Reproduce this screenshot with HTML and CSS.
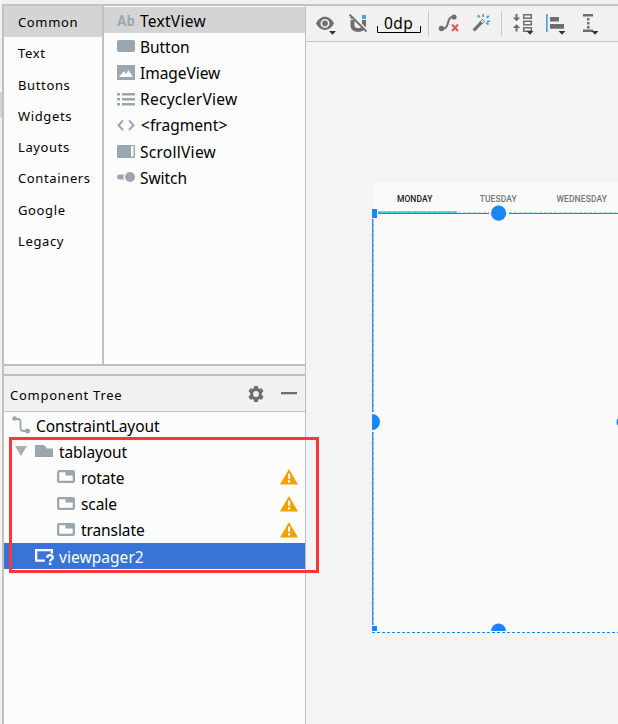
FILE: index.html
```html
<!DOCTYPE html>
<html lang="en">
<head>
<meta charset="utf-8">
<title>Layout Editor</title>
<link rel="stylesheet" href="styles.css">
</head>
<body>
<div class="editor">
  <div class="top-strip"></div>
  <div class="gutter"><div class="gutter-tab"></div></div>
  <aside class="side">
    <section class="palette">
      <nav class="categories">
        <div class="category selected">Common</div>
        <div class="category">Text</div>
        <div class="category">Buttons</div>
        <div class="category">Widgets</div>
        <div class="category">Layouts</div>
        <div class="category">Containers</div>
        <div class="category">Google</div>
        <div class="category">Legacy</div>
      </nav>
      <div class="widgets">
        <div class="widget wide selected"><span class="ab">Ab</span><span>TextView</span></div>
        <div class="widget"><svg class="icon" viewBox="0 0 18 18"><rect y="3" width="18" height="12" rx="2"/></svg><span>Button</span></div>
        <div class="widget"><svg class="icon" viewBox="0 0 18 18"><path fill-rule="evenodd" d="M0 2h18v15H0zM2 14h14l-4.500-7-2.500 4-2-3z"/></svg><span>ImageView</span></div>
        <div class="widget wide"><svg class="icon" viewBox="0 0 18 18"><path d="M0 3h3v2.500H0zM5 3h13v2.500H5zM0 8h3v2.500H0zM5 8h13v2.500H5zM0 13h3v2.500H0zM5 13h13v2.500H5z"/></svg><span>RecyclerView</span></div>
        <div class="widget fragment"><svg class="icon line" viewBox="0 0 18 18"><path d="M6 4.500L1.500 9.200 6 14M12 4.500l4.500 4.700L12 14"/></svg><span>&lt;fragment&gt;</span></div>
        <div class="widget wide"><svg class="icon" viewBox="0 0 18 18"><path fill-rule="evenodd" d="M1 3h16a1 1 0 011 1v11a1 1 0 01-1 1H1a1 1 0 01-1-1V4a1 1 0 011-1zM14 4v10.500h2.500V4z"/></svg><span>ScrollView</span></div>
        <div class="widget switch"><svg class="icon" viewBox="0 0 18 18"><path d="M2.500 6.500H7a6 6 0 000 5H2.500a2.500 2.500 0 010-5z"/><circle cx="13" cy="9" r="5"/></svg><span>Switch</span></div>
      </div>
    </section>
    <div class="splitter"></div>
    <header class="tree-header">
      <span class="tree-title">Component Tree</span>
      <svg class="gear" viewBox="0 0 18 18"><path fill-rule="evenodd" d="M7.200 1h3.600l.5 2.300 1.200.7 2.200-.8 1.800 3.100L14.800 8v2l1.700 1.700-1.800 3.100-2.200-.8-1.200.7-.5 2.300H7.200l-.5-2.300-1.200-.7-2.200.8-1.800-3.100L3.200 10V8L1.500 6.300l1.800-3.100 2.200.8 1.200-.7zM9 6.100a2.900 2.900 0 100 5.800 2.900 2.900 0 000-5.800z"/></svg>
      <svg class="minus" viewBox="0 0 16 18"><path d="M0 7h16v2.300H0z"/></svg>
    </header>
    <section class="tree">
      <div class="node root"><svg class="icon" viewBox="0 0 18 18"><circle cx="2.500" cy="2.500" r="2.300"/><circle cx="15.500" cy="15" r="2.500"/><path class="wire" d="M3 3h3c2 0 2.500 1 2.500 3v6c0 2 1 3 3 3h4"/></svg><span>ConstraintLayout</span></div>
      <div class="node branch"><i class="arrow"></i><svg class="icon" viewBox="0 0 18 18"><path d="M0 3h9l3 3.500h6V15H0z"/></svg><span>tablayout</span></div>
      <div class="node leaf"><svg class="icon" viewBox="0 0 18 18"><use href="#tab-item"/></svg><span>rotate</span><svg class="warn" viewBox="0 0 18 16"><use href="#warning"/></svg></div>
      <div class="node leaf"><svg class="icon" viewBox="0 0 18 18"><use href="#tab-item"/></svg><span>scale</span><svg class="warn" viewBox="0 0 18 16"><use href="#warning"/></svg></div>
      <div class="node leaf"><svg class="icon" viewBox="0 0 18 18"><use href="#tab-item"/></svg><span>translate</span><svg class="warn" viewBox="0 0 18 16"><use href="#warning"/></svg></div>
      <div class="node pager selected"><svg class="icon" viewBox="0 0 19 18"><path d="M0 2h18v4.500h-2.300V4.300H2.300v8.200H10v2.300H0z"/><path class="question" d="M12.200 10.800c0-3.600 5.600-3.500 5.600-.3 0 2-2.700 1.800-2.700 4"/><path d="M13.900 15.600h2.500V18h-2.500z"/></svg><span>viewpager2</span></div>
    </section>
  </aside>
  <main class="design">
    <div class="toolbar">
      <svg class="tools" viewBox="306 6 312 35">
        <g class="dark">
          <path fill-rule="evenodd" d="M316 23.500c4-9 14-9 18 0-4 8.500-14 8.500-18 0zm9-4.600a4.500 4.500 0 100 9 4.500 4.500 0 000-9z"/><circle cx="325" cy="23.400" r="2.800"/>
          <path d="M350.500 20h4v5.500c0 3.500 7.500 3.500 7.500 0V20h4v5.500c0 8.500-15.500 8.500-15.500 0z"/>
          <circle cx="441.500" cy="28.500" r="2.700"/><circle cx="454" cy="17" r="2.600"/>
          <path d="M472.500 29.500l9.500-10 2.300 2.300-9.500 9.700z"/>
          <path d="M515.500 14h2v3.500h2.800l-3.800 3.800-3.800-3.800h2.800zM515.500 31.500h2V28h2.800l-3.800-3.800-3.800 3.800h2.800z"/>
          <path d="M550 17h9v4.500h-9zM550 24h14v4.800h-14zM583 14h10v2.500h-10zM583 29.500h10V32h-10zM587 18h2.500v2.500H587zM587 22h2.500v2.500H587zM587 26h2.500v2.500H587z"/>
        </g>
        <path class="blue" d="M350.500 16h4v3h-4zM362 15h4v4h-4zM546 14h1.700v18H546zM482.300 14h1.700v3h-1.700zM477 16l1.500-1.500 2 2-1.500 1.500zM486 17l2-2 1.500 1.500-2 2zM487 20.500h3v1.500h-3zM485.500 23l1.500-1.300 2.200 2.300-1.500 1.300z"/>
        <path class="slash-gap" d="M351 14.500l16 16"/><path class="slash" d="M349.500 14.500l17 17"/>
        <path class="wire" d="M442 28.500h2c5 0 3-11.500 8-11.500h2"/>
        <path class="red" d="M452 24.500l6 6.500m0-6.500l-6 6.500"/>
        <path class="wand" d="M480.300 21.500l2.200-2.200 2 2-2.200 2.200z"/>
        <path class="bracket" d="M377.500 26v6.500h43V26"/>
        <g class="box"><path d="M523.700 14.700h7.600v3.600h-7.600zM523.700 21.200h7.600v3.600h-7.600zM523.700 27.700h7.600v3.600h-7.600z"/></g>
        <path class="divider" d="M428.500 11v25M501.500 11v25"/>
        <path class="caret" d="M329 31h7l-3.500 3.800zM526.500 31h7l-3.500 3.800zM558.500 31h7l-3.500 3.800zM591.500 31h7l-3.500 3.800z"/>
      </svg>
      <span class="margin-value">0dp</span>
    </div>
    <div class="canvas">
      <div class="device">
        <div class="tabs"><span class="tab active">MONDAY</span><span class="tab">TUESDAY</span><span class="tab wed">WEDNESDAY</span></div>
      </div>
      <svg class="handles" viewBox="366 200 252 440">
        <path class="teal" d="M378 211h79v2.500h-79z"/>
        <path class="edge" d="M378 213.500h111M509 213.500h109M372.700 219v193M372.700 432v193"/>
        <path class="edge-dashes" d="M378 212.500h111M509 212.500h109M373.500 219v193M373.500 432v193"/>
        <path class="dashes" d="M372 632.500h246"/>
        <path class="halo" d="M371 208h7v11h-7zM371 625h7v7h-7z"/>
        <path class="fill" d="M372 209h5v9h-5zM372 626h5v5h-5zM372 414a8 8 0 010 16zM491 631a7.500 7.500 0 0115 0zM618 418.500c-2 1-2 6 0 7z"/>
        <circle class="fill" cx="498.600" cy="213.200" r="7.600"/>
      </svg>
    </div>
  </main>
  <div class="highlight"></div>
</div>
<svg class="defs">
  <defs>
    <g id="tab-item"><path fill-rule="evenodd" d="M2 2h14a2 2 0 012 2v9a2 2 0 01-2 2H2a2 2 0 01-2-2V4a2 2 0 012-2zM2.300 4.300v8.400h13.400V7.500H8.500V4.300z"/></g>
    <g id="warning"><path class="tri" d="M9 0l9 15.500H0z"/><path class="mark" d="M8 4.800h2.200v5H8zM8 11.300h2.200v2.200H8z"/></g>
  </defs>
</svg>
</body>
</html>
```
FILE: styles.css
```css
* { box-sizing: border-box; }
body { margin: 0; background: #f4f4f4; color: #000; overflow: hidden; font-family: "Noto Sans", "Open Sans", sans-serif; }
svg { display: block; }
.defs { position: absolute; width: 0; height: 0; }
.editor {
  position: relative;
  display: grid;
  grid-template: 6px 718px / 4px 302px 312px;
  width: 618px;
  height: 724px;
}
.top-strip { grid-column: 1 / -1; margin-left: 2px; background: #f1f1f1; border-bottom: 2px solid #c3c3c3; }
.gutter { background: #f1f1f1; border-right: 2px solid #c0c0c0; padding-top: 86px; }
.gutter-tab { height: 26px; background: #d4d4d4; }
.side { display: flex; flex-direction: column; background: #fcfcfc; border-right: 1px solid #c0c0c0; }

.palette { display: flex; height: 358px; }
.categories { width: 100px; border-right: 2px solid #c0c0c0; }
.category { height: 31.25px; padding-left: 14px; font-size: 13px; line-height: 32px; letter-spacing: .63px; white-space: nowrap; }
.category.selected { background: #d4d4d4; }
.widgets { flex: 1; padding-top: 1px; }
.widget { display: flex; align-items: center; gap: 5px; height: 26.2px; padding-left: 13px; font-size: 15.5px; letter-spacing: -.05px; white-space: nowrap; }
.widget.wide { letter-spacing: .27px; }
.widget.selected { background: #d4d4d4; }
.widget.fragment { gap: 6px; letter-spacing: .05px; }
.icon { flex: none; width: 18px; height: 18px; fill: #9aa7b0; }
.icon.line { fill: none; stroke: #9aa7b0; stroke-width: 2; }
.icon .wire { fill: none; stroke: #9aa7b0; stroke-width: 1.8; }
.ab { width: 18px; color: #9aa7b0; font: bold 14px Roboto, sans-serif; }
.widget span, .node span { padding-top: 1px; }

.splitter { height: 12px; background: #f1f1f1; border-top: 2px solid #c0c0c0; border-bottom: 2px solid #c0c0c0; }
.tree-header { display: flex; align-items: center; height: 36px; padding: 0 8px 0 6px; background: #f1f1f1; border-bottom: 1px solid #c0c0c0; }
.tree-title { flex: 1; font-size: 13px; letter-spacing: .75px; padding-top: 3px; }
.gear { width: 18px; height: 18px; fill: #6e6e6e; margin-right: 16px; }
.minus { width: 16px; height: 18px; fill: #6e6e6e; }
.tree { flex: 1; }
.node { display: flex; align-items: center; gap: 6px; height: 26.2px; font-size: 15.5px; letter-spacing: -.1px; white-space: nowrap; }
.root { padding-left: 8px; }
.branch { padding-left: 11px; }
.leaf { padding: 0 7px 0 53px; }
.pager { padding-left: 31px; letter-spacing: .05px; }
.node.selected { background: #3874d8; color: #fff; }
.selected .icon { fill: #fff; width: 19px; margin-right: -1px; }
.question { fill: none; stroke: #fff; stroke-width: 2.300; }
.arrow { border: 6px solid transparent; border-top: 10px solid #adadad; border-bottom: 0; margin-right: 2px; }
.warn { width: 18px; height: 16px; margin-left: auto; }
.tri { fill: #eda200; }
.mark { fill: #fff; }

.design { display: flex; flex-direction: column; }
.toolbar { position: relative; height: 36px; background: #f1f1f1; border-bottom: 1px solid #c6c6c6; }
.tools { width: 312px; height: 35px; }
.dark { fill: #6e6e6e; }
.blue { fill: #40a7e0; }
.slash { stroke: #6e6e6e; stroke-width: 1.800; }
.slash-gap { stroke: #f1f1f1; stroke-width: 2.500; }
.tools .wire { fill: none; stroke: #6e6e6e; stroke-width: 2; }
.red { stroke: #db5860; stroke-width: 2; }
.wand { fill: #f1f1f1; stroke: #6e6e6e; }
.bracket { fill: none; stroke: #000; }
.box { fill: none; stroke: #6e6e6e; stroke-width: 1.500; }
.divider { stroke: #c8c8c8; }
.caret { fill: #333; }
.margin-value { position: absolute; left: 78px; top: 7px; font-size: 15.5px; line-height: 20px; letter-spacing: .4px; }

.canvas { position: relative; flex: 1; padding: 141px 0 0 67px; background: #f4f4f4; }
.device { height: 449px; background: #fafafa; overflow: hidden; }
.tabs { display: flex; height: 31px; align-items: center; font: 500 8.500px Roboto, sans-serif; letter-spacing: .1px; color: #757575; }
.tab { flex: none; width: 83.500px; text-align: center; white-space: nowrap; }
.tab.active { color: #212121; }
.handles { position: absolute; left: 60px; top: 158px; width: 252px; height: 440px; }
.teal { fill: #55dfd3; }
.edge { fill: none; stroke: #1886f7; stroke-width: 1.200; }
.edge-dashes { fill: none; stroke: #1886f7; stroke-opacity: .35; stroke-dasharray: 3 2; }
.dashes { stroke: #1886f7; stroke-dasharray: 3 2; stroke-width: 1.200; }
.halo { fill: #fafafa; }
.fill { fill: #1886f7; }
.highlight { position: absolute; left: 9px; top: 437px; width: 310px; height: 136px; border: 3px solid #fc3639; }
```
